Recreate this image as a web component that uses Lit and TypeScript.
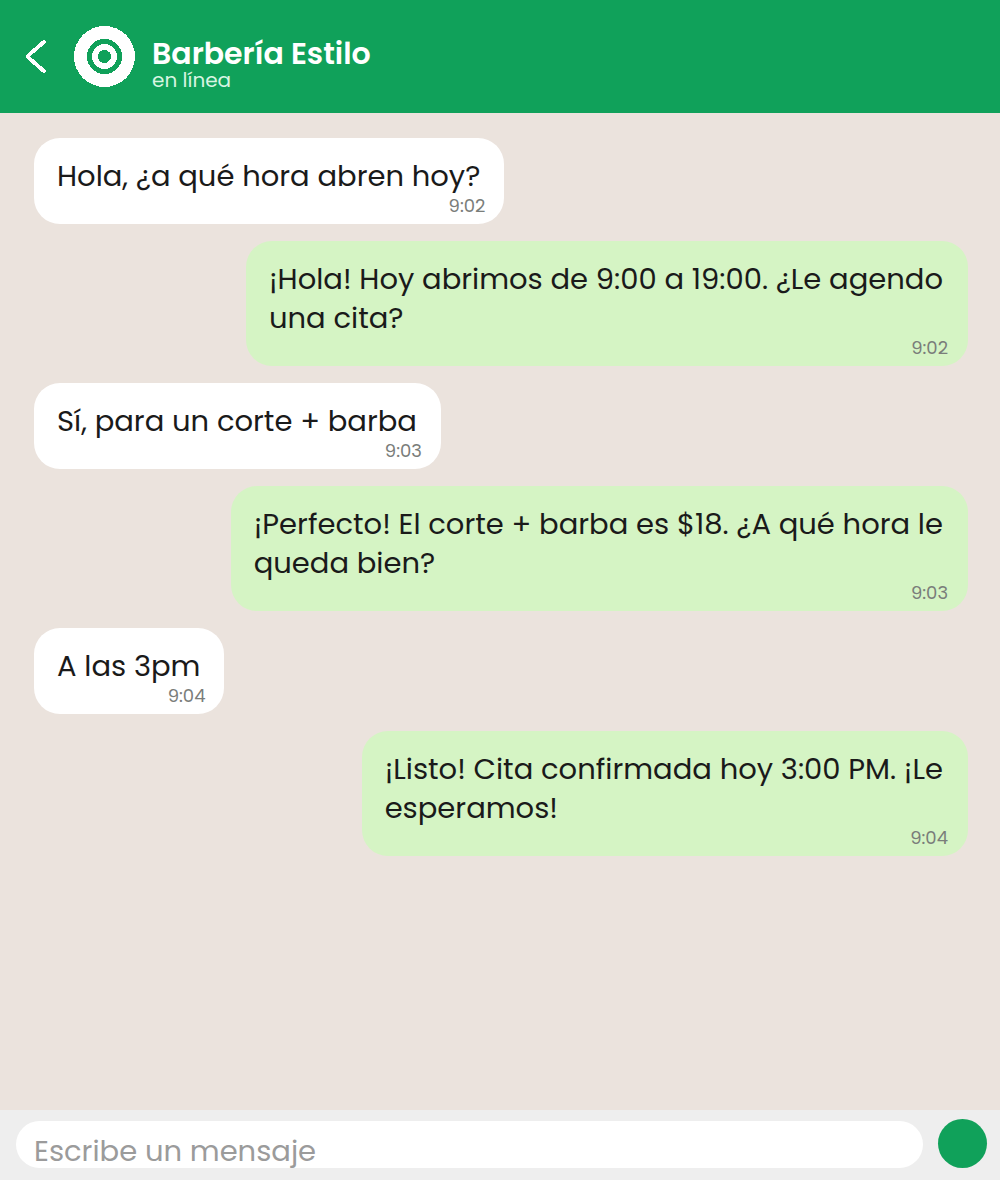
import { LitElement, html, css } from "lit";
import { customElement, property, state } from "lit/decorators.js";
import { classMap } from "lit/directives/class-map.js";

interface Message {
  lines: string[];
  time: string;
  own: boolean;
}

const initialMessages: Message[] = [
  { lines: ["Hola, ¿a qué hora abren hoy?"], time: "9:02", own: false },
  { lines: ["¡Hola! Hoy abrimos de 9:00 a 19:00. ¿Le agendo", "una cita?"], time: "9:02", own: true },
  { lines: ["Sí, para un corte + barba"], time: "9:03", own: false },
  { lines: ["¡Perfecto! El corte + barba es $18. ¿A qué hora le", "queda bien?"], time: "9:03", own: true },
  { lines: ["A las 3pm"], time: "9:04", own: false },
  { lines: ["¡Listo! Cita confirmada hoy 3:00 PM. ¡Le", "esperamos!"], time: "9:04", own: true },
];

@customElement("chat-bubble")
export class ChatBubble extends LitElement {
  @property({ attribute: false }) message!: Message;

  static styles = css`
    :host {
      display: flex;
      flex-direction: column;
    }
    .bubble {
      display: flex;
      flex-direction: column;
      box-sizing: border-box;
      max-width: 84%;
      align-self: flex-start;
      padding: 19px 19px 9px 23px;
      border-radius: 26px;
      background: #ffffff;
      color: #1a1a1a;
    }
    .own {
      align-self: flex-end;
      padding-right: 20px;
      background: #d5f4c4;
    }
    .text {
      margin: 0;
      padding-right: 5px;
      font-size: 29px;
      line-height: 39px;
    }
    .line {
      display: block;
    }
    .time {
      align-self: flex-end;
      font-size: 18px;
      line-height: 19px;
      color: #7a7d7a;
    }
  `;

  render() {
    const { lines, time, own } = this.message;
    return html`
      <div class=${classMap({ bubble: true, own })}>
        <p class="text">${lines.map((line) => html`<span class="line">${line}</span>`)}</p>
        <time class="time">${time}</time>
      </div>
    `;
  }
}

@customElement("app-root")
export class AppRoot extends LitElement {
  @state() private messages = initialMessages;

  static styles = css`
    :host {
      display: flex;
      flex-direction: column;
      min-height: 100vh;
      background: #ebe3dd;
      font-family: Poppins, Inter, "Open Sans", sans-serif;
    }
    .header {
      display: flex;
      align-items: flex-start;
      padding: 26px 24px 22px;
      background: #10a15a;
      color: #ffffff;
    }
    .back {
      display: flex;
      margin: 0 26px 0 0;
      padding: 12px 0;
      border: 0;
      background: none;
    }
    .avatar {
      display: block;
      margin-right: 17px;
    }
    .name {
      margin: 0;
      font-size: 30px;
      line-height: 30px;
      font-weight: 600;
    }
    .status {
      margin: 0;
      font-size: 20px;
      line-height: 22px;
      color: #d8f5e2;
    }
    .contact {
      padding-top: 13px;
    }
    .messages {
      display: flex;
      flex-direction: column;
      flex: 1;
      gap: 17px;
      margin: 0;
      padding: 25px 32px 25px 34px;
      list-style: none;
    }
    .composer {
      display: flex;
      align-items: flex-end;
      gap: 15px;
      padding: 9px 13px 12px 16px;
      background: #eeeeee;
    }
    .field {
      box-sizing: border-box;
      flex: 1;
      min-width: 0;
      height: 47px;
      padding: 13px 18px 0;
      border: 0;
      border-radius: 24px;
      outline: none;
      background: #ffffff;
      color: #1a1a1a;
      font-family: inherit;
      font-size: 29px;
      line-height: 34px;
    }
    .field::placeholder {
      color: #9b9b9b;
      opacity: 1;
    }
    .send {
      width: 49px;
      height: 49px;
      padding: 0;
      border: 0;
      border-radius: 50%;
      background: #10a15a;
    }
  `;

  private send(event: Event) {
    event.preventDefault();
    const form = event.target as HTMLFormElement;
    const text = String(new FormData(form).get("message") ?? "").trim();
    if (!text) return;
    const now = new Date();
    const time = `${now.getHours()}:${String(now.getMinutes()).padStart(2, "0")}`;
    this.messages = [...this.messages, { lines: [text], time, own: true }];
    form.reset();
  }

  render() {
    return html`
      <header class="header">
        <button class="back" type="button" aria-label="Volver">
          <svg width="24" height="36" viewBox="0 0 24 36" fill="none" shape-rendering="crispEdges">
            <path d="M21.3 2.7 3.2 18.5 21.3 34.3" stroke="#fff" stroke-width="3.8" stroke-linejoin="bevel" />
          </svg>
        </button>
        <svg class="avatar" width="61" height="61" viewBox="0 0 61 61" shape-rendering="crispEdges" aria-hidden="true">
          <circle cx="30.5" cy="30.5" r="30.5" fill="#fff" />
          <circle cx="30.5" cy="30.5" r="15" fill="none" stroke="#10a15a" stroke-width="5" />
          <circle cx="30.5" cy="30.5" r="6.5" fill="#10a15a" />
        </svg>
        <div class="contact">
          <h1 class="name">Barbería Estilo</h1>
          <p class="status">en línea</p>
        </div>
      </header>
      <ul class="messages">
        ${this.messages.map((message) => html`<li><chat-bubble .message=${message}></chat-bubble></li>`)}
      </ul>
      <form class="composer" @submit=${this.send}>
        <input class="field" name="message" type="text" placeholder="Escribe un mensaje" aria-label="Escribe un mensaje" autocomplete="off" />
        <button class="send" type="submit" aria-label="Enviar"></button>
      </form>
    `;
  }
}
